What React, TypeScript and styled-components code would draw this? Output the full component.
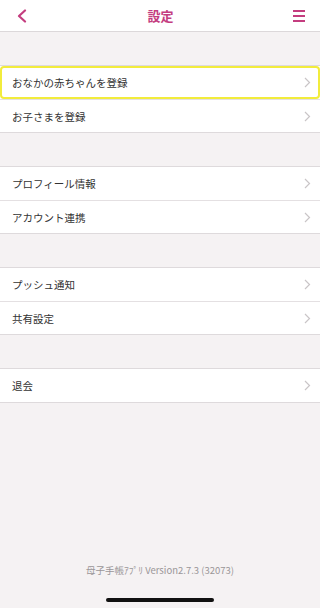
import styled, { createGlobalStyle } from "styled-components";

const PINK = "#c43d7f";

const sections = [
  ["おなかの赤ちゃんを登録", "お子さまを登録"],
  ["プロフィール情報", "アカウント連携"],
  ["プッシュ通知", "共有設定"],
  ["退会"],
];

const GlobalStyle = createGlobalStyle`
  html, body {
    margin: 0;
    padding: 0;
    background: #f5f2f3;
  }
  body {
    font-family: "Noto Sans CJK JP", "Noto Sans", sans-serif;
  }
`;

function Chevron() {
  return (
    <svg width="7" height="11" viewBox="0 0 7 11">
      <path d="M1 1l4.5 4.5L1 10" fill="none" stroke="#c9c5c7" strokeWidth="1.2" />
    </svg>
  );
}

export default function App() {
  return (
    <>
      <GlobalStyle />
      <Page>
        <Header>
          <IconButton>
            <svg width="12" height="14" viewBox="0 0 12 14">
              <path d="M9 1.5L3 7l6 5.5" fill="none" stroke={PINK} strokeWidth="2.2" strokeLinecap="round" strokeLinejoin="round" />
            </svg>
          </IconButton>
          <Title>設定</Title>
          <IconButton>
            <svg width="14" height="14" viewBox="0 0 14 14">
              <path d="M1 2h12M1 7h12M1 12h12" stroke={PINK} strokeWidth="2" />
            </svg>
          </IconButton>
        </Header>
        <Sections>
          {sections.map((items, i) => (
            <Group key={i}>
              {items.map((label, j) => (
                <Row key={label} $focused={i === 0 && j === 0}>
                  <span>{label}</span>
                  <Chevron />
                </Row>
              ))}
            </Group>
          ))}
        </Sections>
        <Footer>母子手帳ｱﾌﾟﾘ Version2.7.3 (32073)</Footer>
        <HomeBar />
      </Page>
    </>
  );
}

const Page = styled.div`
  display: flex;
  flex-direction: column;
  height: 608px;
  background: #f5f2f3;
`;

const Header = styled.header`
  height: 32px;
  box-sizing: border-box;
  background: #fff;
  border-bottom: 1px solid #dcd8da;
  display: flex;
  align-items: center;
  justify-content: space-between;
  padding: 0 13px 0 14px;
`;

const IconButton = styled.div`
  width: 16px;
  display: flex;
  align-items: center;
  justify-content: center;
`;

const Title = styled.h1`
  margin: 0;
  font-size: 13px;
  font-weight: 700;
  color: ${PINK};
`;

const Sections = styled.div`
  display: flex;
  flex-direction: column;
  gap: 33px;
  padding-top: 33px;
`;

const Group = styled.div`
  display: flex;
  flex-direction: column;
  background: #fff;
  border-top: 1px solid #dedadc;
  border-bottom: 1px solid #dedadc;
  & > * + * {
    border-top: 1px solid #e4e0e2;
  }
`;

const Row = styled.div<{ $focused: boolean }>`
  height: 33px;
  box-sizing: border-box;
  display: flex;
  align-items: center;
  justify-content: space-between;
  padding: 0 9px 0 12px;
  font-size: 10.5px;
  color: #333;
  ${({ $focused }) =>
    $focused &&
    `
    outline: 2px solid #f2ec3c;
    outline-offset: -2px;
    border-radius: 4px;
  `}
`;

const Footer = styled.div`
  margin-top: auto;
  text-align: center;
  font-size: 9.5px;
  color: #9a9698;
  padding-bottom: 21px;
`;

const HomeBar = styled.div`
  width: 108px;
  height: 4px;
  border-radius: 2px;
  background: #111;
  margin: 0 auto 6px;
`;
